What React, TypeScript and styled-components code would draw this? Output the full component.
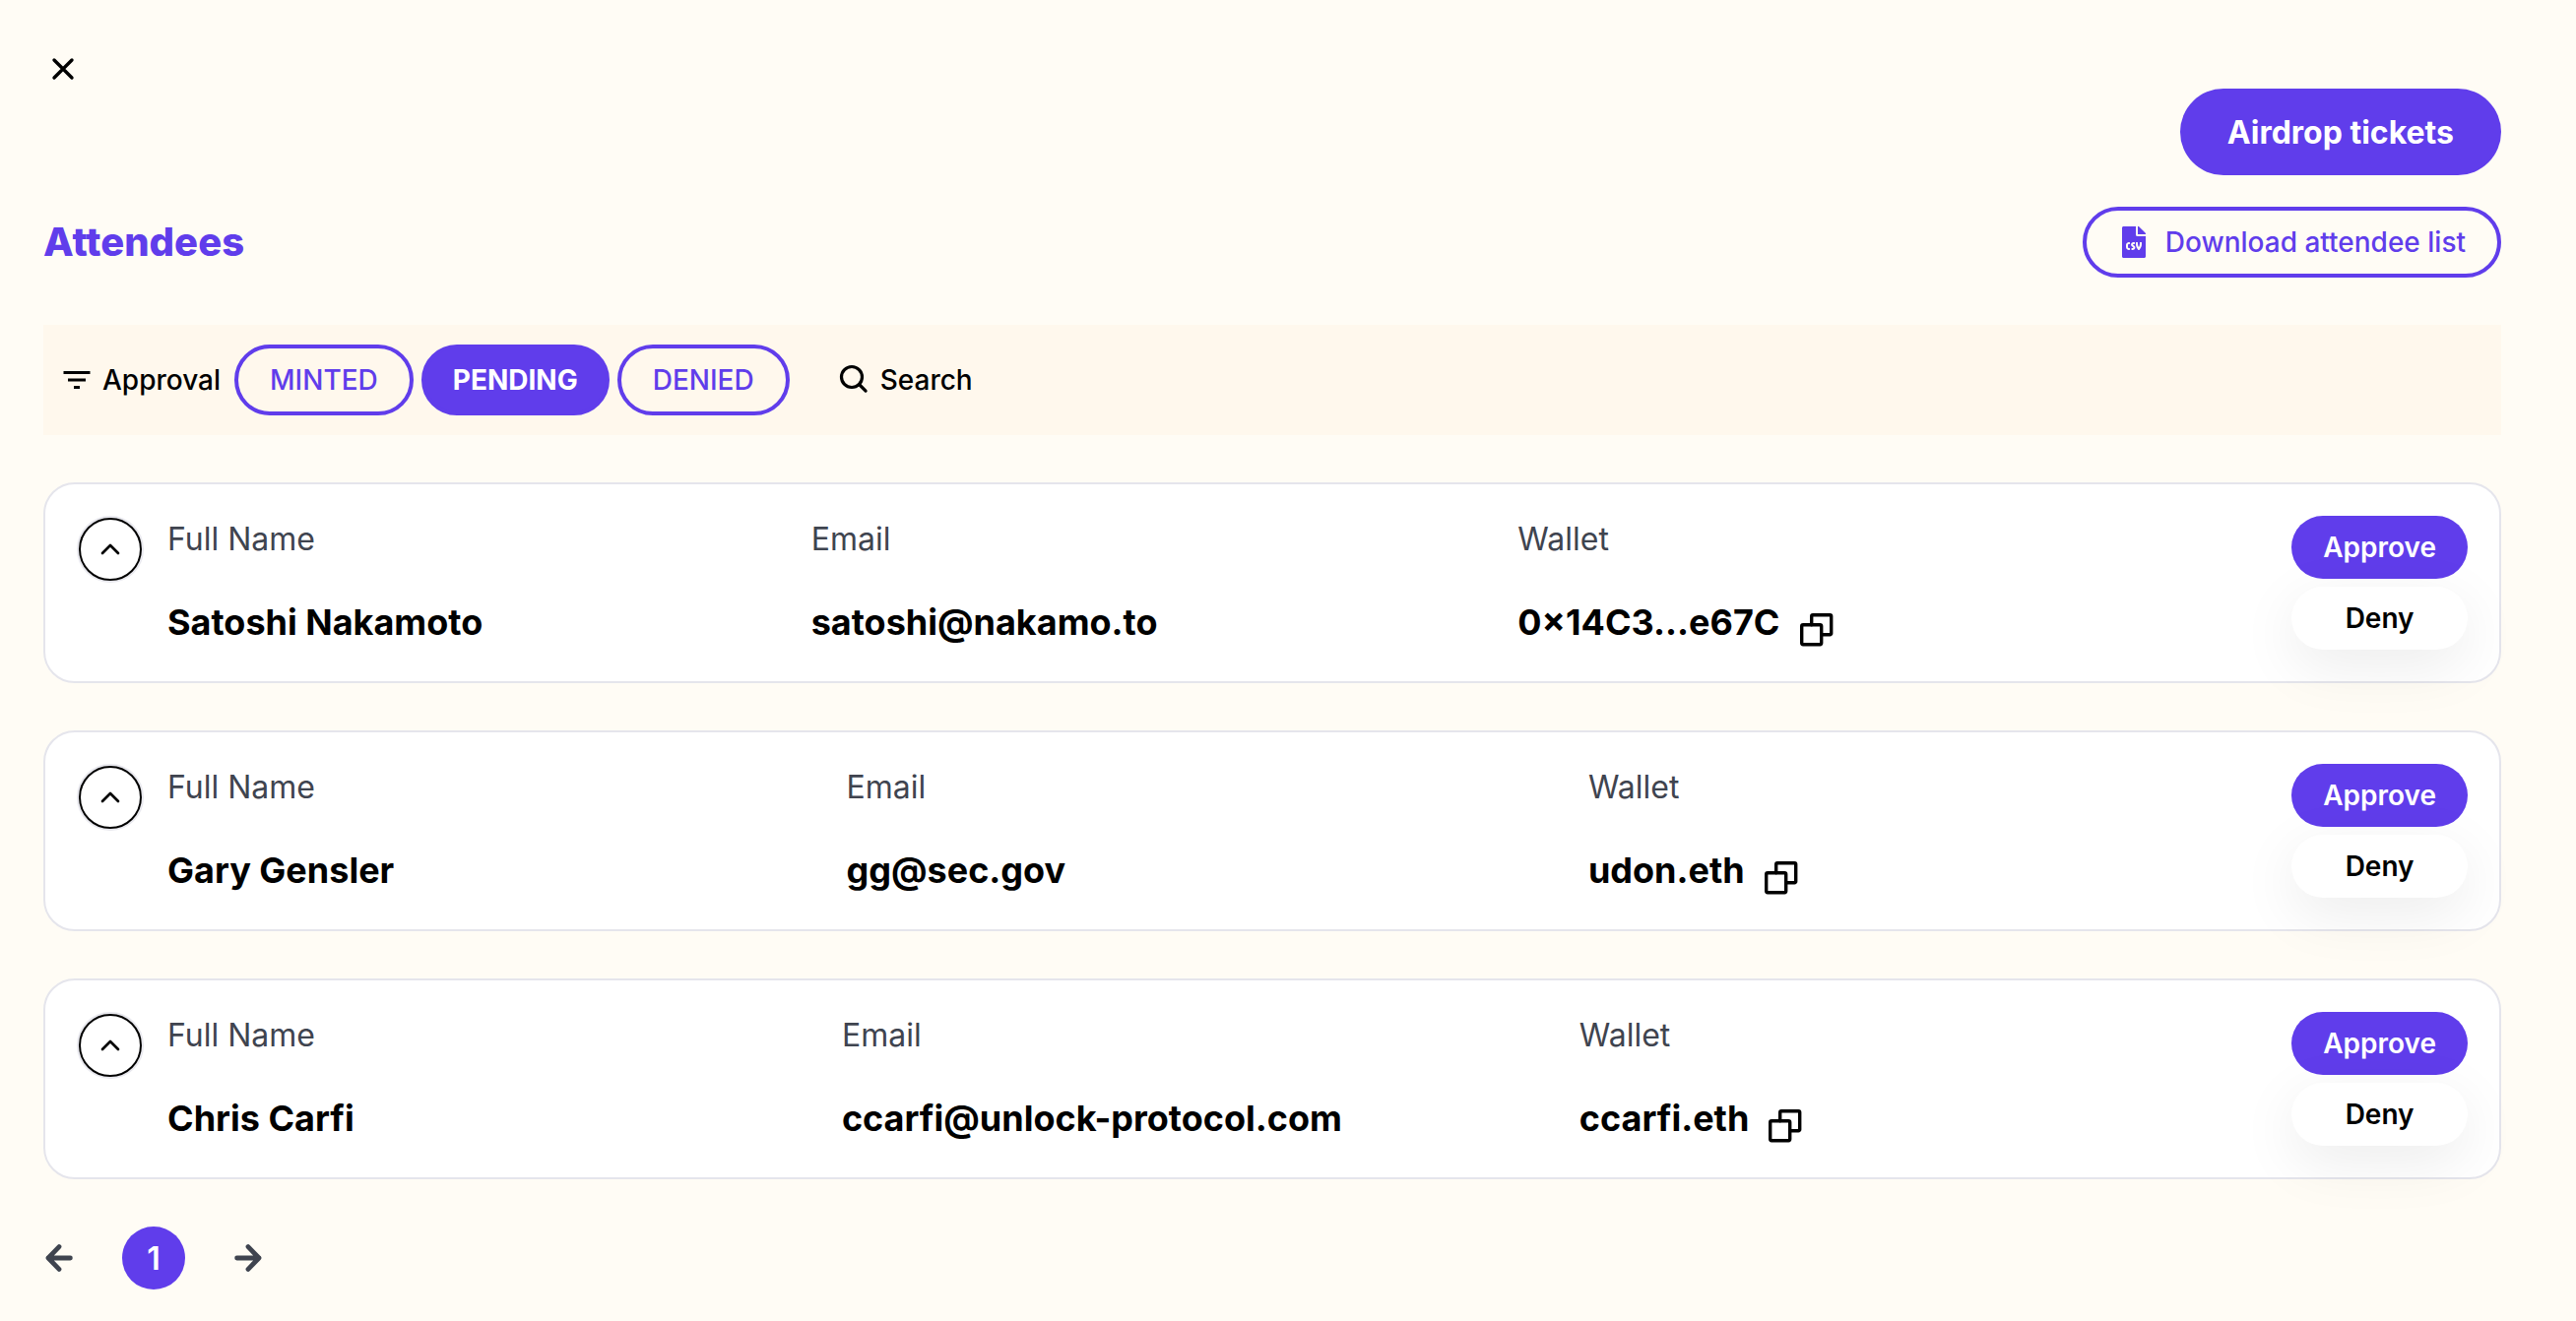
import React from "react";
import styled, { createGlobalStyle } from "styled-components";
import { FaFileCsv } from "react-icons/fa";
import { FiChevronUp } from "react-icons/fi";
import { MdFilterList } from "react-icons/md";

const purple = "#603deb";

const GlobalStyle = createGlobalStyle`
  *, *::before, *::after { box-sizing: border-box; }
  body {
    margin: 0;
    background: #fffcf5;
    color: #000;
    font-family: Inter, "Liberation Sans", sans-serif;
  }
  button { font: inherit; cursor: pointer; }
  svg { display: block; flex: none; }
`;

const Page = styled.main`
  padding: 50px 76px 24px 44px;
`;

const CloseButton = styled.button`
  display: block;
  padding: 0;
  border: 0;
  background: none;
  color: inherit;
`;

const Actions = styled.div`
  display: flex;
  justify-content: flex-end;
`;

const PrimaryButton = styled.button`
  height: 88px;
  padding: 0 48px;
  border: 0;
  border-radius: 44px;
  background: ${purple};
  color: #fff;
  font-size: 32px;
  font-weight: 700;
`;

const Header = styled.header`
  display: flex;
  align-items: center;
  justify-content: space-between;
  margin-top: 32px;
`;

const Title = styled.h1`
  margin: 0;
  color: ${purple};
  font-size: 40px;
  line-height: 56px;
  font-weight: 800;
`;

const Pill = styled.button<{ $active?: boolean }>`
  display: flex;
  align-items: center;
  gap: 16px;
  height: 72px;
  padding: 0 ${(p) => (p.$active ? 28 : 32)}px;
  border: 4px solid ${purple};
  border-radius: 36px;
  background: ${(p) => (p.$active ? purple : "transparent")};
  color: ${(p) => (p.$active ? "#fff" : purple)};
  font-size: 28px;
  font-weight: ${(p) => (p.$active ? 700 : 500)};
`;

const FilterBar = styled.section`
  display: flex;
  align-items: center;
  gap: 48px;
  margin-top: 48px;
  padding: 20px 16px;
  background: #fff8ed;
`;

const Group = styled.div`
  display: flex;
  align-items: center;
  gap: 14px;
`;

const PillRow = styled.div`
  display: flex;
  gap: 8px;
`;

const FilterLabel = styled.span`
  display: flex;
  align-items: center;
  gap: 8px;
  font-size: 28px;
  font-weight: 500;
`;

const SearchButton = styled.button`
  display: flex;
  align-items: center;
  gap: 8px;
  padding: 0;
  border: 0;
  background: none;
  color: inherit;
  font-size: 28px;
  font-weight: 500;
`;

const List = styled.ul`
  display: grid;
  gap: 48px;
  margin: 48px 0 0;
  padding: 0;
  list-style: none;
`;

const Card = styled.li`
  display: flex;
  align-items: flex-start;
  gap: 24px;
  padding: 32px;
  border: 2px solid #e5e5ec;
  border-radius: 32px;
  background: #fff;
`;

const Toggle = styled.button`
  flex: none;
  width: 68px;
  height: 68px;
  padding: 0;
  border: 2px solid #e8e8ee;
  border-radius: 50%;
  background: none;
  color: #000;
`;

const ToggleRing = styled.span`
  display: flex;
  align-items: center;
  justify-content: center;
  height: 64px;
  border: 2px solid #000;
  border-radius: 50%;
`;

const Details = styled.dl`
  display: flex;
  flex: 1;
  min-width: 0;
  margin: 0;
`;

const Field = styled.div<{ $basis: string }>`
  flex: 1 1 ${(p) => p.$basis};
  min-width: 0;
  white-space: nowrap;
`;

const Label = styled.dt`
  color: #3f444f;
  font-size: 32px;
  line-height: 48px;
`;

const Value = styled.dd`
  display: flex;
  align-items: center;
  gap: 18px;
  margin: 32px 0 0;
  font-size: 36px;
  line-height: 56px;
  font-weight: 700;
`;

const CopyButton = styled.button`
  margin-top: 16px;
  padding: 0;
  border: 0;
  background: none;
  color: #000;
`;

const CardActions = styled.div`
  display: grid;
  gap: 8px;
  margin-left: -24px;
`;

const SmallButton = styled.button<{ $primary?: boolean }>`
  height: 64px;
  padding: 0 32px;
  border: 0;
  border-radius: 32px;
  background: ${(p) => (p.$primary ? purple : "#fff")};
  color: ${(p) => (p.$primary ? "#fff" : "#000")};
  box-shadow: ${(p) => (p.$primary ? "none" : "0 16px 60px rgba(0, 0, 0, 0.08)")};
  font-size: 28px;
  font-weight: 600;
`;

const Pager = styled.nav`
  display: flex;
  align-items: center;
  gap: 48px;
  margin-top: 48px;
`;

const PagerArrow = styled.button`
  padding: 0;
  border: 0;
  background: none;
  color: #3f444f;
`;

const PageNumber = styled.button`
  width: 64px;
  height: 64px;
  padding: 0;
  border: 0;
  border-radius: 50%;
  background: ${purple};
  color: #fff;
  font-size: 32px;
  font-weight: 600;
`;

const CloseIcon = () => (
  <svg width="40" height="40" viewBox="0 0 40 40" fill="none" stroke="currentColor" strokeWidth="3.4" strokeLinecap="round" aria-hidden="true">
    <path d="M11 11l18 18M29 11L11 29" />
  </svg>
);

const SearchIcon = () => (
  <svg width="36" height="36" viewBox="0 0 36 36" fill="none" stroke="currentColor" strokeWidth="3.2" strokeLinecap="round" aria-hidden="true">
    <circle cx="15" cy="15" r="10.5" />
    <path d="M22.5 22.5l6.6 6.6" />
  </svg>
);

const CopyIcon = () => (
  <svg width="38" height="38" viewBox="0 0 38 38" fill="none" stroke="currentColor" strokeWidth="3.4" strokeLinejoin="round" strokeLinecap="round" aria-hidden="true">
    <rect x="3.7" y="13.7" width="20" height="20" rx="1.4" />
    <path d="M13.7 13.7V5a1.3 1.3 0 0 1 1.3-1.3h17.4A1.3 1.3 0 0 1 33.7 5v17.4a1.3 1.3 0 0 1-1.3 1.3h-8.7" />
  </svg>
);

const ArrowIcon = ({ d }: { d: string }) => (
  <svg width="32" height="32" viewBox="0 0 32 32" fill="none" stroke="currentColor" strokeWidth="4.8" strokeLinecap="round" strokeLinejoin="round" aria-hidden="true">
    <path d={d} />
  </svg>
);

const filters = ["MINTED", "PENDING", "DENIED"];

const attendees = [
  { name: "Satoshi Nakamoto", email: "satoshi@nakamo.to", wallet: "0×14C3...e67C" },
  { name: "Gary Gensler", email: "gg@sec.gov", wallet: "udon.eth" },
  { name: "Chris Carfi", email: "ccarfi@unlock-protocol.com", wallet: "ccarfi.eth" },
];

export default function App() {
  return (
    <>
      <GlobalStyle />
      <Page>
        <CloseButton aria-label="Close"><CloseIcon /></CloseButton>
        <Actions>
          <PrimaryButton>Airdrop tickets</PrimaryButton>
        </Actions>
        <Header>
          <Title>Attendees</Title>
          <Pill>
            <FaFileCsv size={32} aria-hidden="true" />
            Download attendee list
          </Pill>
        </Header>
        <FilterBar>
          <Group>
            <FilterLabel>
              <MdFilterList size={36} aria-hidden="true" />
              Approval
            </FilterLabel>
            <PillRow>
              {filters.map((f) => (
                <Pill key={f} $active={f === "PENDING"}>{f}</Pill>
              ))}
            </PillRow>
          </Group>
          <SearchButton>
            <SearchIcon />
            Search
          </SearchButton>
        </FilterBar>
        <List>
          {attendees.map((a) => (
            <Card key={a.name}>
              <Toggle aria-label="Collapse">
                <ToggleRing><FiChevronUp size={32} /></ToggleRing>
              </Toggle>
              <Details>
                <Field $basis="190px">
                  <Label>Full Name</Label>
                  <Value>{a.name}</Value>
                </Field>
                <Field $basis="254px">
                  <Label>Email</Label>
                  <Value>{a.email}</Value>
                </Field>
                <Field $basis="auto">
                  <Label>Wallet</Label>
                  <Value>
                    {a.wallet}
                    <CopyButton aria-label="Copy wallet"><CopyIcon /></CopyButton>
                  </Value>
                </Field>
              </Details>
              <CardActions>
                <SmallButton $primary>Approve</SmallButton>
                <SmallButton>Deny</SmallButton>
              </CardActions>
            </Card>
          ))}
        </List>
        <Pager aria-label="Pagination">
          <PagerArrow aria-label="Previous page"><ArrowIcon d="M5 16h22.4M16 4.6L5 16l11 11.4" /></PagerArrow>
          <PageNumber>1</PageNumber>
          <PagerArrow aria-label="Next page"><ArrowIcon d="M27 16H4.6M16 4.6L27 16 16 27.4" /></PagerArrow>
        </Pager>
      </Page>
    </>
  );
}
